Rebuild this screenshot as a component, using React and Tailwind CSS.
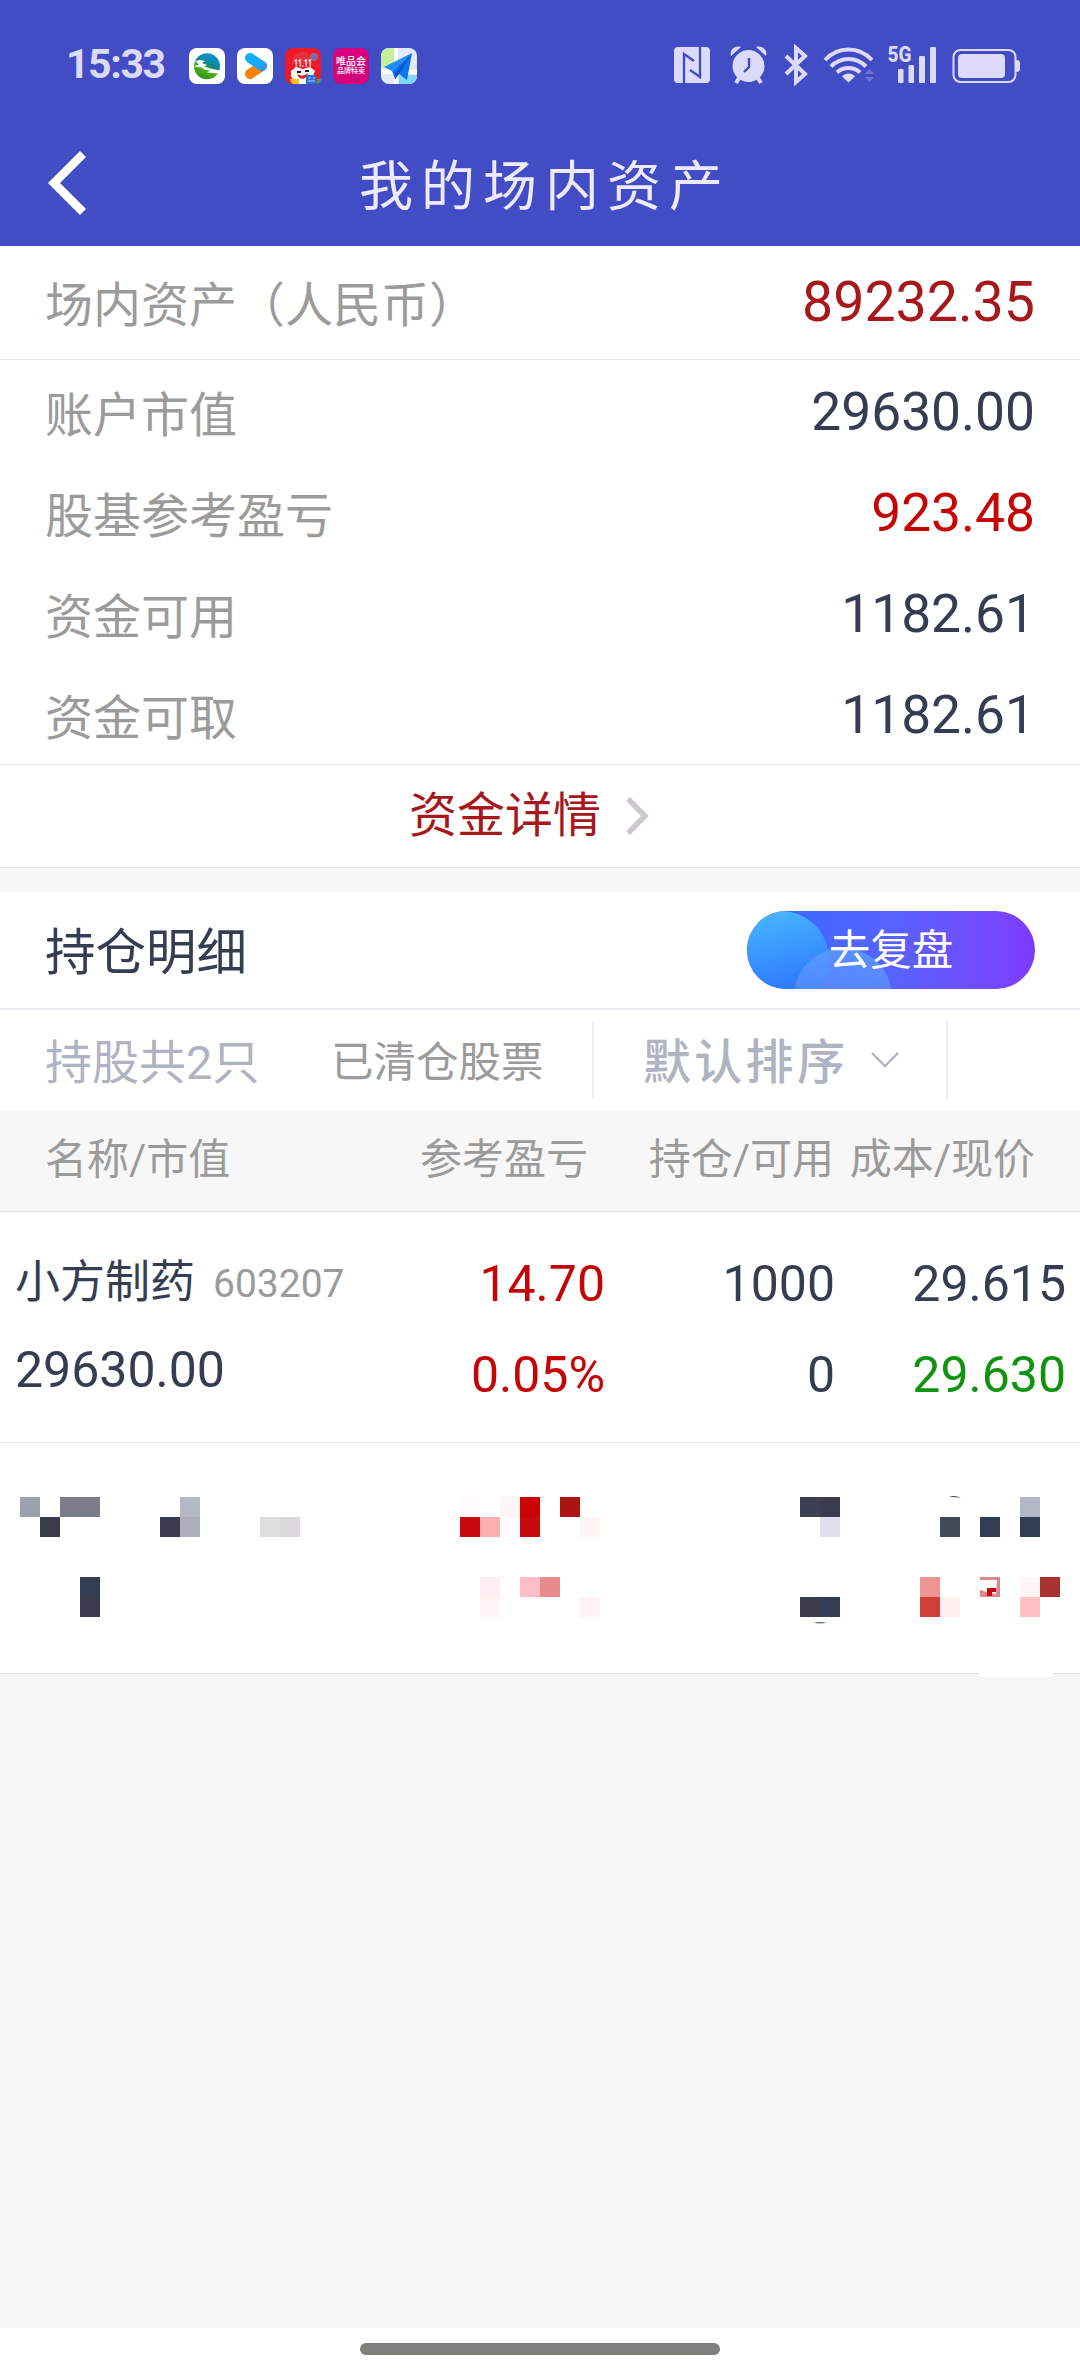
const summary = [
    { label: '账户市值', value: '29630.00', color: 'text-[#363d52]' },
    { label: '股基参考盈亏', value: '923.48', color: 'text-[#c50505]' },
    { label: '资金可用', value: '1182.61', color: 'text-[#363d52]' },
    { label: '资金可取', value: '1182.61', color: 'text-[#363d52]' },
];

// Masked holding row: [x, y, fill, width] in units of one mosaic block
const mosaic = [
    [1, 0, '#9da1ad'], [3, 0, '#7b7c8a', 2], [2, 1, '#3a3d49'],
    [9, 0, '#b5b9c5'], [8, 1, '#3b3b50'], [9, 1, '#abadbd'],
    [13, 1, '#dedede'], [14, 1, '#dcd9dd'],
    [4, 4, '#323c53'], [4, 5, '#3b3b50'],
    [23, 0, '#fffaff'], [25, 0, '#fff5f5'], [26, 0, '#cb0303'],
    [23, 1, '#c60a0d'], [24, 1, '#ffafaf'], [25, 1, '#fffaff'], [26, 1, '#c60a0d'],
    [28, 0, '#ab1410'], [29, 1, '#fff5f5'],
    [24, 4, '#ffeef4'], [24, 5, '#fff5f5'], [26, 4, '#ffbdc6'], [27, 4, '#e78a8c'], [29, 5, '#fff1f5'],
    [40, 0, '#3b4052'], [41, 0, '#3b3b50'], [41, 1, '#e0dfef'],
    [40, 5, '#3a3d49'], [41, 5, '#323c53'],
    [51, 0, '#b3b6c4'], [47, 1, '#44495a'], [49, 1, '#323c53'], [51, 1, '#323c53'],
    [46, 4, '#ef9394'], [46, 5, '#cc4039'], [47, 5, '#ffeeee'],
    [49, 4, '#dd898b'], [51, 4, '#fff5f5'], [52, 4, '#a83330'], [51, 5, '#ffc1c4'],
];

function AppIcons() {
    return (
        <div className="ml-6 flex gap-3">
            <svg className="size-9" viewBox="0 0 36 36">
                <defs>
                    <linearGradient id="lake" x1="0.7" y1="0" x2="0.3" y2="1">
                        <stop offset="0.2" stopColor="#0d8fc4" />
                        <stop offset="0.45" stopColor="#15857e" />
                        <stop offset="0.6" stopColor="#54b51b" />
                        <stop offset="1" stopColor="#2b8a1c" />
                    </linearGradient>
                </defs>
                <rect width="36" height="36" rx="8" fill="#fff" />
                <circle cx="18" cy="18.3" r="13" fill="url(#lake)" />
                <path d="M6 13l5-1 5 1-3 2 5 2-3 1.500 6 2 10 2-1 3-12-1 3-2-6-1-2-2-8-1 5-2z" fill="#fff" />
            </svg>
            <svg className="size-9" viewBox="0 0 36 36">
                <rect width="36" height="36" rx="8" fill="#fff" />
                <path d="M13 26l12-8" stroke="#ff8208" strokeWidth="10" strokeLinecap="round" />
                <path d="M13 10l12 8" stroke="#12aef5" strokeWidth="10" strokeLinecap="round" />
                <path d="M20 21l5 2c3-1 5-3 5-5l-5-4z" fill="#2b97f0" />
            </svg>
            <svg className="size-9" viewBox="0 0 36 36">
                <rect width="36" height="36" rx="8" fill="#ef1829" />
                <path d="M7 16c0-9 5-12 11-12s9 4 9 12z" fill="#e8303a" />
                <circle cx="29" cy="9" r="4" fill="#8a6a9c" />
                <path d="M6 23l5-4 7 2 7-2 5 4-3 7-3 6H10l-4-8z" fill="#fff" />
                <path d="M12 26c3 2 8 2 11-1-1 7-9 8-11 1z" fill="#d9232e" />
                <path d="M12 24h4M20 23h4" stroke="#1c1a20" strokeWidth="2" />
                <text x="18" y="19" textAnchor="middle" fontSize="11" fontWeight="700" fill="#fff" fontFamily="Roboto" textLength="18" lengthAdjust="spacingAndGlyphs">11.11</text>
                <path d="M5 31h9v5H9c-2 0-4-2-4-5z" fill="#fcbf1c" />
                <path d="M21 27h10v9H21z" fill="#2673d6" />
                <path d="M23 30h3M28 30h2M23 33h7" stroke="#b7d8ff" />
                <path d="M32 31h4c0 2-1 4-4 5z" fill="#3da469" />
            </svg>
            <div className="flex size-9 flex-col items-center rounded-lg bg-[#d6007c] pt-[7px] text-white">
                <span className="text-[10px] leading-[13px] font-medium">唯品会</span>
                <span className="text-[7px] leading-[7px] font-medium">品牌特卖</span>
            </div>
            <svg className="size-9" viewBox="0 0 36 36">
                <defs>
                    <clipPath id="mapClip"><rect width="36" height="36" rx="8" /></clipPath>
                </defs>
                <g clipPath="url(#mapClip)">
                    <rect width="36" height="36" fill="#e3eafd" />
                    <path d="M0 0h13v20H0z" fill="#c3f09f" />
                    <path d="M18 27h18v9H18z" fill="#7ed6fb" />
                    <path d="M15 0v36M0 24h36" stroke="#fff" strokeWidth="4" />
                </g>
                <path d="M31 5L3 19l8 4z" fill="#1c8dff" />
                <path d="M31 5L11 23l3 8 4-5 8 6z" fill="#0a74f2" />
                <path d="M31 5L14 25v6l4-5z" fill="#0757c4" />
            </svg>
        </div>
    );
}

function SystemIcons() {
    return (
        <svg className="mr-[60px] ml-auto h-[38px] w-[346px] overflow-visible" viewBox="674 45 346 38" fill="#dcdaf9">
            {/* NFC */}
            <rect x="674" y="46" width="36" height="36" rx="4" />
            <path d="M684 82V53l10 7M700 46v30l-10-7" fill="none" stroke="#424cc4" strokeWidth="2.4" />
            {/* Alarm */}
            <circle cx="748.500" cy="65" r="16" />
            <path d="M731 55c-2-6 4-11 10-9zM766 55c2-6-4-11-10-9z" />
            <path d="M739 77l-3 5M758 77l3 5" stroke="#dcdaf9" strokeWidth="4" />
            <path d="M749 57v9l-5 5" fill="none" stroke="#424cc4" strokeWidth="2.4" />
            {/* Bluetooth */}
            <path d="M786 55l19 18-9 8V47l9 8-19 18" fill="none" stroke="#dcdaf9" strokeWidth="4" />
            {/* Wifi */}
            <g fill="none" stroke="#dcdaf9" strokeWidth="4">
                <path d="M825 59c13-14 34-14 47 0" />
                <path d="M831 65.500c10-10 25-10 35 0" />
                <path d="M837 71.500c6-6 17-6 23 0" />
            </g>
            <path d="M842 75.500c3-4 10-4 13 0l-6.500 6z" />
            <path d="M865 73l4.500-5 4.500 5zM865 76h9l-4.500 5z" fill="#6d73d6" />
            {/* Signal */}
            <text x="887.500" y="61" fontSize="22" fontWeight="800" fontFamily="Roboto" textLength="24" lengthAdjust="spacingAndGlyphs">5G</text>
            <rect x="898" y="68" width="5.500" height="14" rx="1" />
            <rect x="908.500" y="64" width="5.500" height="18" rx="1" />
            <rect x="919" y="55" width="6" height="27" rx="1" />
            <rect x="930" y="46" width="6" height="36" rx="1" />
            {/* Battery */}
            <rect x="953.500" y="49" width="62" height="32" rx="7" fill="none" stroke="#dcdaf9" strokeWidth="2" />
            <rect x="958" y="53" width="47" height="24" rx="4" />
            <path d="M1016 59c3 0 4 1 4 3v6c0 2-1 3-4 3z" />
        </svg>
    );
}

function Pair({ top, bottom, bottomColor = '', className = '' }) {
    return (
        <div className={`flex flex-col gap-[31px] pt-[42px] text-right text-[50px] leading-[60px] ${className}`}>
            <span>{top}</span>
            <span className={bottomColor}>{bottom}</span>
        </div>
    );
}

export default function App() {
    return (
        <div className="flex h-[2376px] w-[1080px] flex-col bg-[#f7f7f7] font-[Roboto,'Noto_Sans_CJK_SC',sans-serif] whitespace-nowrap text-[#363d52]">
            <header className="h-[246px] bg-[#424cc4]">
                <div className="flex h-[84px] items-end pl-[66px]">
                    <time className="mb-[-4px] w-[99px] text-[41px] leading-[48px] font-bold tracking-[-1.4px] text-[#dcdaf9]">15:33</time>
                    <div className="flex flex-1 items-end">
                        <AppIcons />
                        <SystemIcons />
                    </div>
                </div>
                <div className="flex h-[162px] items-center">
                    <svg className="mt-[36px] ml-[48px] h-[66px] w-[40px]" viewBox="0 0 40 66" fill="none">
                        <path d="M35 4L6 33l29 29" stroke="#fff" strokeWidth="8.500" />
                    </svg>
                    <h1 className="mt-[45px] ml-[271px] text-[54px] leading-[80px] tracking-[8px] text-[#edebfb]">我的场内资产</h1>
                </div>
            </header>

            <section className="bg-white px-[45px]">
                <div className="-mx-[45px] flex h-[114px] items-center justify-between border-b border-[#e5e5e5] px-[45px]">
                    <span className="pt-1.5 text-[48px] text-[#9b9b9b]">场内资产（人民币）</span>
                    <span className="text-[55.5px] leading-none text-[#a7171b]">89232.35</span>
                </div>
                {summary.map((item) => (
                    <div key={item.label} className="flex h-[101px] items-center justify-between">
                        <span className="pt-2.5 text-[48px] text-[#9b9b9b]">{item.label}</span>
                        <span className={`pt-1 text-[53.3px] leading-none ${item.color}`}>{item.value}</span>
                    </div>
                ))}
            </section>
            <button className="flex h-[104px] items-center justify-center border-y border-[#e5e5e5] bg-white pr-5 text-[48px] text-[#a7171b]">
                资金详情
                <svg className="ml-6 h-[40px] w-[26px]" viewBox="0 0 26 40" fill="none">
                    <path d="M3 3l17 17L3 37" stroke="#cdc8cf" strokeWidth="5.500" />
                </svg>
            </button>

            <section className="mt-6 bg-white">
                <div className="flex h-[118px] items-center justify-between border-b-2 border-[#ecedf5] px-[45px]">
                    <h2 className="pt-1.5 text-[50.5px]">持仓明细</h2>
                    <button className="relative h-[78px] w-[288px] overflow-hidden rounded-full bg-linear-to-r from-[#2c6cff] via-[#5762ff] to-[#7d3aff] text-[41.5px] text-white">
                        <svg className="absolute inset-0" width="288" height="78" viewBox="0 0 288 78">
                            <defs>
                                <linearGradient id="orb" x1="0" y1="0" x2="0.25" y2="1">
                                    <stop offset="0" stopColor="#4bbcff" />
                                    <stop offset="1" stopColor="#2b72ff" />
                                </linearGradient>
                                <linearGradient id="orbSmall" x1="0" y1="0" x2="0" y2="1">
                                    <stop offset="0" stopColor="#5b9cff" stopOpacity="0.8" />
                                    <stop offset="1" stopColor="#5b84ff" stopOpacity="0.6" />
                                </linearGradient>
                            </defs>
                            <circle cx="34" cy="48" r="48" fill="url(#orb)" />
                            <circle cx="96" cy="86" r="49" fill="url(#orbSmall)" />
                        </svg>
                        <span className="relative top-px">去复盘</span>
                    </button>
                </div>
                <div className="flex h-[100px] items-center">
                    <span className="w-[286px] pt-1.5 pl-[45px] text-[47px] text-[#b0b3c1]">持股共2只</span>
                    <span className="ml-[45px] w-[261px] pt-1.5 text-[42.5px] text-[#9b9b9b]">已清仓股票</span>
                    <div className="flex h-[78px] w-[356px] items-center border-x-2 border-[#ecedf5] pl-[49px]">
                        <span className="pt-1.5 text-[48px] font-medium tracking-[3.3px] text-[#b0b3c1]">默认排序</span>
                        <svg className="ml-[22px] h-[18px] w-[30px]" viewBox="0 0 30 18" fill="none">
                            <path d="M2 2l13 13L28 2" stroke="#b0b5c6" strokeWidth="2.400" />
                        </svg>
                    </div>
                </div>
            </section>

            <div className="grid h-[102px] grid-cols-[588px_246px_201px] items-center border-b border-[#e5e5e5] pb-0.5 text-right text-[42px] text-[#9b9b9b]">
                <div className="flex justify-between pl-[45px]">
                    <span>名称/市值</span>
                    <span>参考盈亏</span>
                </div>
                <span>持仓/可用</span>
                <span>成本/现价</span>
            </div>
            <div className="grid h-[231px] grid-cols-[375px_230px_230px_231px] border-b border-[#e5e5e5] bg-white">
                <div className="flex flex-col gap-[25px] pt-[41px] pl-[15px]">
                    <div className="flex items-baseline gap-[18px] text-[45px] leading-[60px]">
                        小方制药
                        <span className="relative -top-px text-[39px] text-[#9b9b9b]">603207</span>
                    </div>
                    <span className="text-[50px] leading-[60px]">29630.00</span>
                </div>
                <Pair top="14.70" bottom="0.05%" className="text-[#c50505]" />
                <Pair top="1000" bottom="0" />
                <Pair top="29.615" bottom="29.630" bottomColor="text-[#109410]" />
            </div>
            <div className="relative h-[231px] border-b border-[#e5e5e5] bg-white">
                <svg className="block h-[234px] w-[1080px]" viewBox="0 1443 1080 234" shapeRendering="crispEdges">
                    {mosaic.map(([x, y, fill, w = 1]) => (
                        <rect key={`${x}-${y}`} x={x * 20} y={1497 + y * 20} width={w * 20} height="20" fill={fill} />
                    ))}
                    <g shapeRendering="auto">
                        <path d="M980 1580h17l-1 14-6-1-10-3z" fill="#fff" />
                        <path d="M987 1588h9v4h-4v4h-5z" fill="#c60a0d" />
                        <path d="M949 1497c4-2 8-1 12 .6z" fill="#44495a" />
                        <path d="M814 1622h12c-3 2-9 2-12 0z" fill="#7b7c8a" />
                    </g>
                    <rect x="979" y="1672" width="74" height="5" fill="#fff" />
                </svg>
            </div>

            <footer className="mt-auto flex h-12 justify-center bg-white pt-[15px]">
                <div className="h-3 w-[360px] rounded-full bg-[#7c7f7a]" />
            </footer>
        </div>
    );
}
